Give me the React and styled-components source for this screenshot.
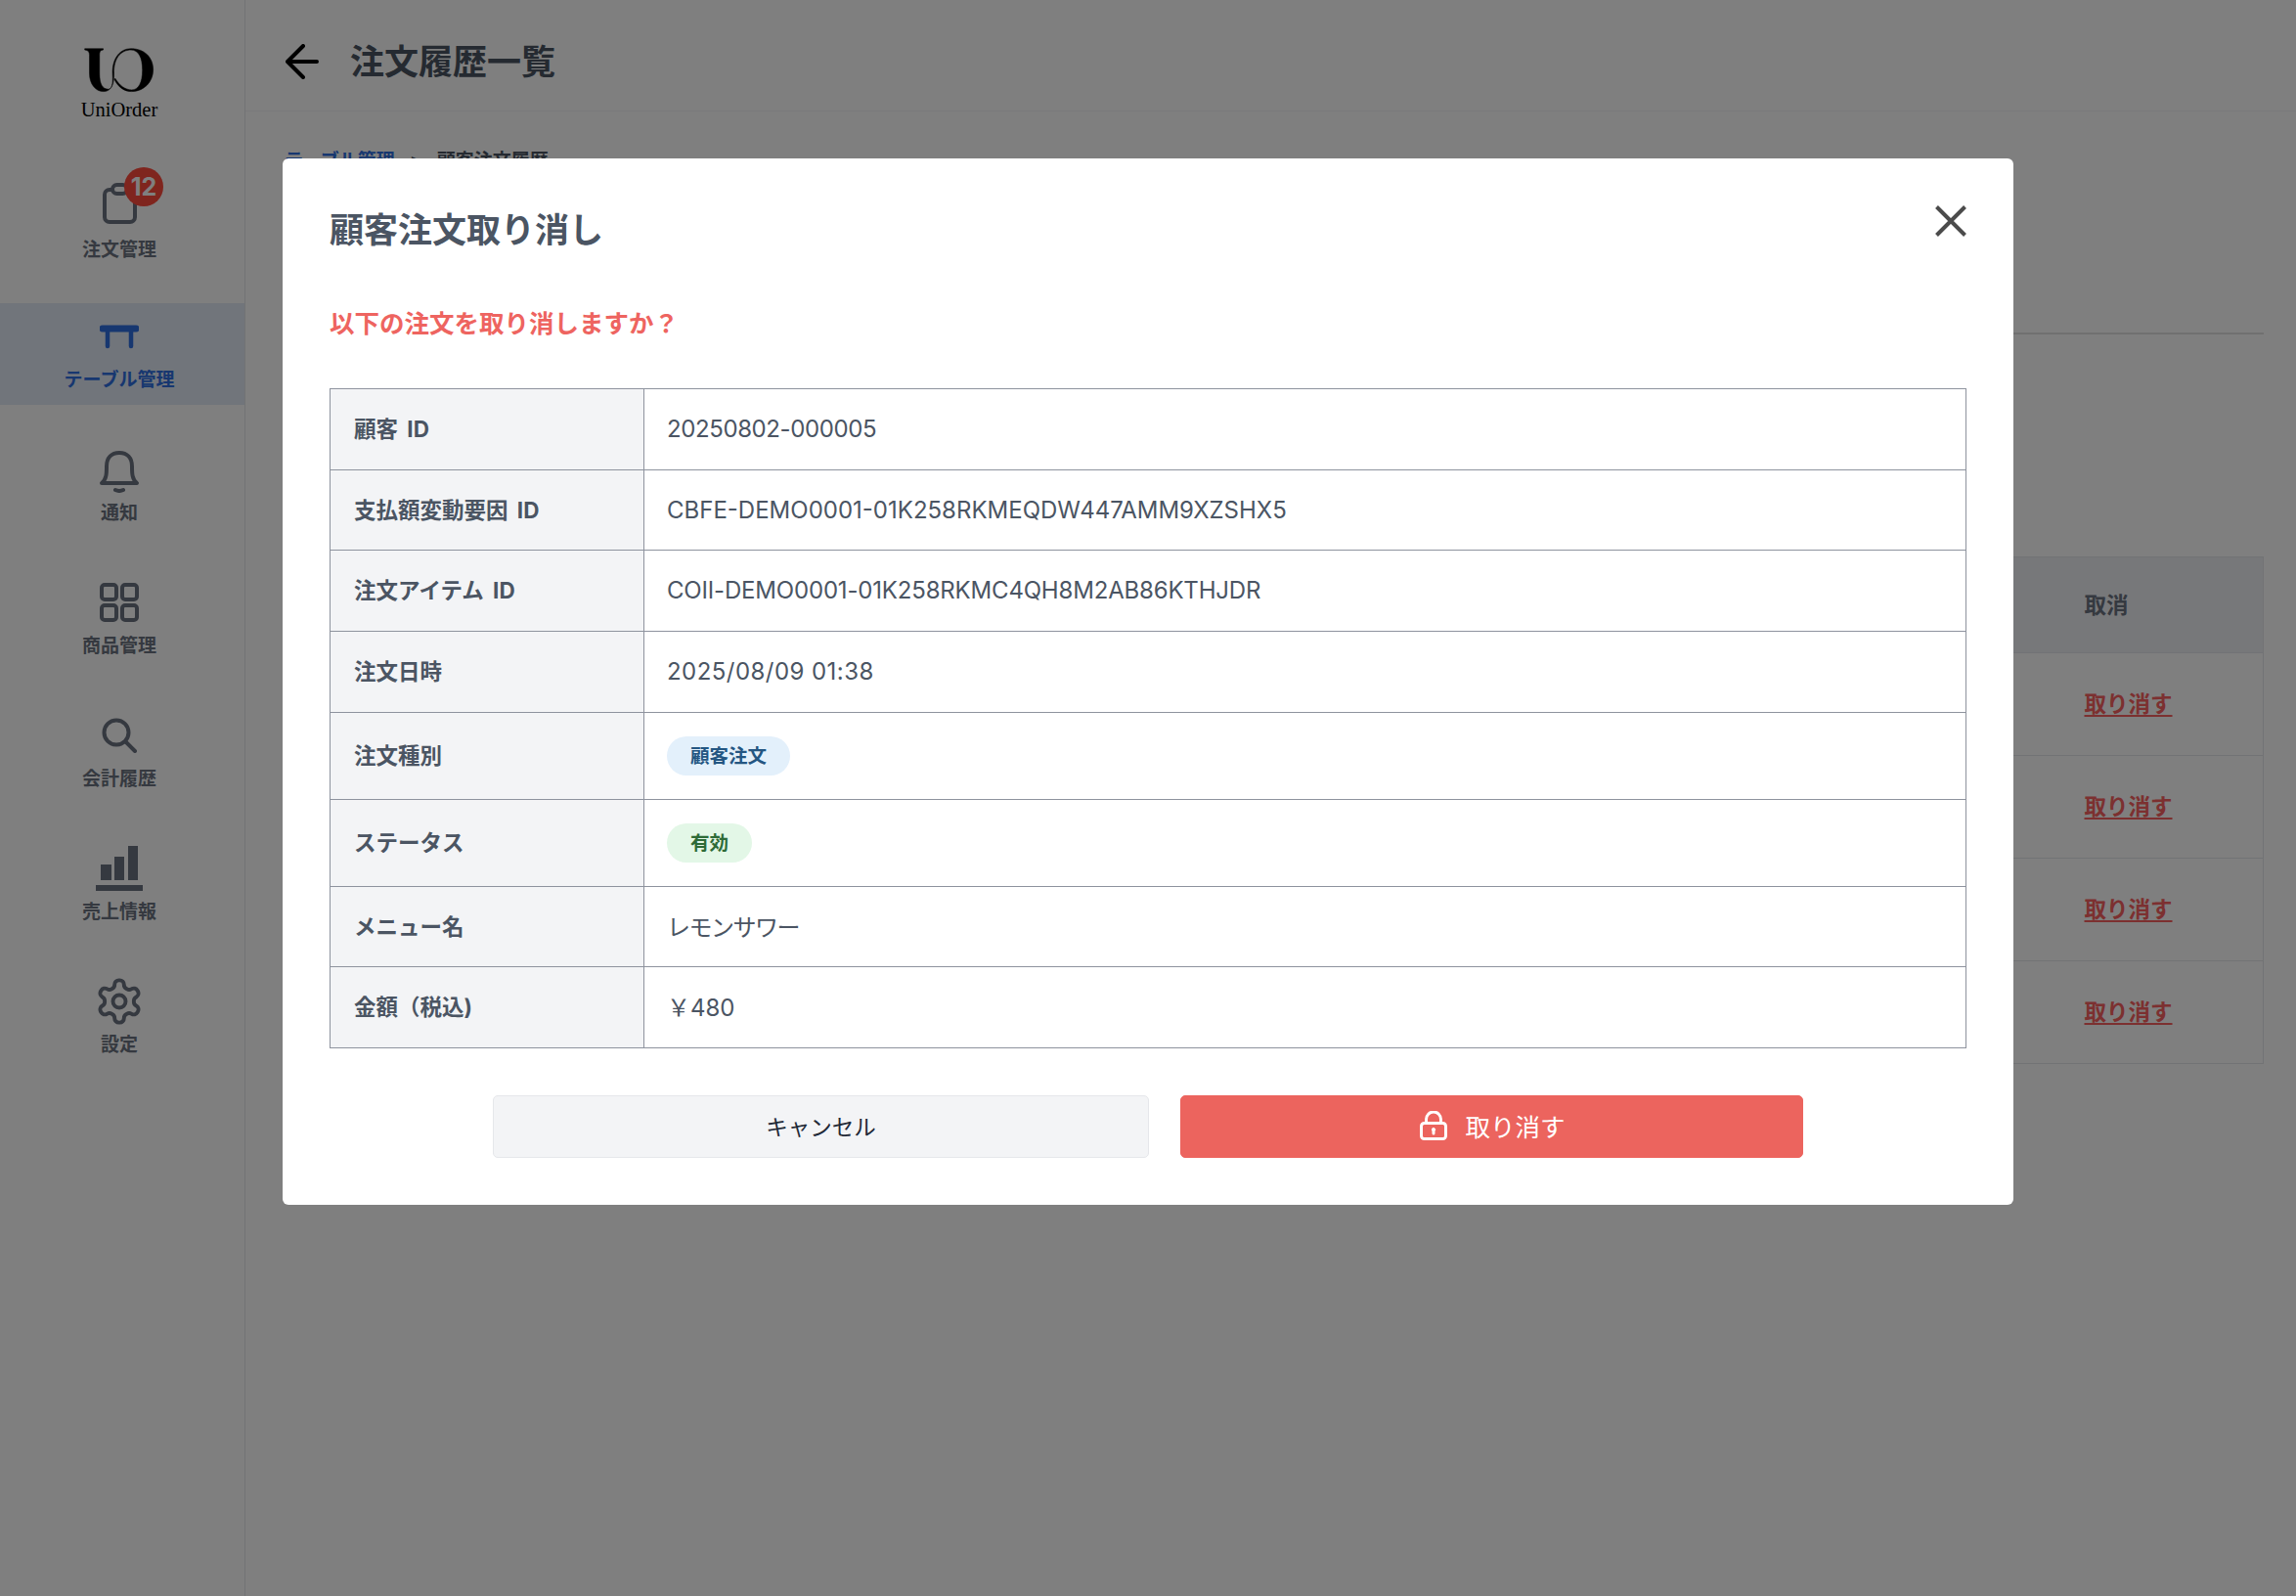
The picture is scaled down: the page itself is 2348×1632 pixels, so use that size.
import styled, { createGlobalStyle } from "styled-components";

const GlobalStyle = createGlobalStyle`
  * { box-sizing: border-box; }
  html, body { margin: 0; padding: 0; background: #fff; }
  body {
    font-family: "Inter", "Noto Sans CJK JP", sans-serif;
    color: #4b5563;
  }
`;

const Page = styled.div`
  display: flex;
  min-height: 100vh;
  background: #fff;
`;

const Sidebar = styled.aside`
  width: 251px;
  flex-shrink: 0;
  border-right: 1px solid #e5e7eb;
  background: #fff;
`;

const LogoBlock = styled.div`
  height: 174px;
  padding: 47px 6px 0 0;
  display: flex;
  flex-direction: column;
  align-items: center;
`;

const LogoText = styled.span`
  font-family: "Liberation Serif", serif;
  font-size: 20.5px;
  line-height: 24px;
  margin-top: 3px;
  color: #000;
`;

const Nav = styled.nav`
  display: flex;
  flex-direction: column;
  gap: 32px;
`;

const NavItem = styled.div`
  height: 104px;
  padding: 10px 6px 0 0;
  display: flex;
  flex-direction: column;
  align-items: center;
  background: ${(p) => (p.$active ? "#e3eaf6" : "transparent")};
  color: ${(p) => (p.$active ? "#2f6fe0" : "#6b7280")};
`;

const NavIcon = styled.div`
  position: relative;
  width: 52px;
  height: 48px;
  display: flex;
  align-items: center;
  justify-content: center;
  margin-bottom: ${(p) => (p.$badged ? "8px" : "5px")};
`;

const NavLabel = styled.span`
  font-size: 19px;
  line-height: 31px;
  font-weight: 700;
  white-space: nowrap;
`;

const CountBadge = styled.span`
  position: absolute;
  top: -13px;
  left: 31px;
  width: 40px;
  height: 40px;
  border-radius: 50%;
  background: #ff4a3d;
  color: #fff;
  font-size: 25px;
  font-weight: 700;
  display: flex;
  align-items: center;
  justify-content: center;
`;

const Main = styled.main`
  flex: 1;
  min-width: 0;
`;

const TopBar = styled.header`
  height: 114px;
  padding: 8px 40px 0 41px;
  border-bottom: 1px solid #f3f4f6;
  display: flex;
  align-items: center;
  gap: 32px;
`;

const BackLink = styled.span`
  display: flex;
  padding-top: 5px;
`;

const PageTitle = styled.h1`
  margin: 0;
  font-size: 35px;
  font-weight: 700;
  color: #4b5563;
`;

const Content = styled.div`
  padding: 36px 33px 0 40px;
`;

const Breadcrumb = styled.div`
  display: flex;
  align-items: center;
  gap: 15px;
  font-size: 19px;
  line-height: 30px;
  font-weight: 700;
`;

const CrumbLink = styled.span`
  color: #2f6fe0;
`;

const Divider = styled.div`
  height: 2px;
  margin-top: 160px;
  background: #e0e0e0;
`;

const OrderTable = styled.table`
  width: 100%;
  margin-top: 227px;
  border-collapse: collapse;
  border: 1px solid #e5e7eb;
`;

const OrderHead = styled.th`
  width: ${(p) => (p.$w ? `${p.$w}px` : "auto")};
  height: 98px;
  padding: 0 24px 3px;
  text-align: left;
  font-size: 22.5px;
  background: #eff0f4;
  color: #6b7280;
`;

const OrderCell = styled.td`
  height: 105px;
  padding: 0 24px 5px;
  border-top: 1px solid #e5e7eb;
`;

const CancelLink = styled.a`
  font-size: 22.5px;
  font-weight: 700;
  color: #f86060;
  text-decoration: underline;
  text-underline-offset: 3px;
`;

const Overlay = styled.div`
  position: fixed;
  inset: 0;
  padding-top: 162px;
  background: rgba(0, 0, 0, 0.5);
  display: flex;
  justify-content: center;
  align-items: flex-start;
`;

const Modal = styled.section`
  position: relative;
  width: 1770px;
  padding: 48px;
  border-radius: 6px;
  background: #fff;
`;

const CloseButton = styled.button`
  position: absolute;
  top: 48px;
  right: 48px;
  width: 32px;
  height: 32px;
  padding: 0;
  border: 0;
  background: none;
  display: flex;
`;

const ModalTitle = styled.h2`
  margin: 0;
  font-size: 35px;
  line-height: 50px;
  font-weight: 700;
  color: #4b5563;
`;

const Warning = styled.p`
  margin: 51px 0 0;
  font-size: 25.5px;
  line-height: 40px;
  font-weight: 700;
  color: #ee6460;
`;

const DetailTable = styled.table`
  width: 100%;
  margin-top: 46px;
  border-collapse: collapse;
  table-layout: fixed;
`;

const DetailRow = styled.tr`
  height: ${(p) => p.$h}px;
`;

const DetailHead = styled.th`
  width: 321px;
  padding: 0 24px 4px;
  border: 1px solid #8e939e;
  background: #f3f4f6;
  text-align: left;
  font-size: 22.5px;
  font-weight: 700;
  word-spacing: 4px;
  color: #4b5563;
`;

const DetailCell = styled.td`
  padding: 0 23px ${(p) => (p.$raise ? "3px" : "1px")};
  border: 1px solid #8e939e;
  font-size: 24px;
  font-weight: 400;
  letter-spacing: ${(p) => p.$track || 0}px;
  color: #4b5563;
`;

const Pill = styled.span`
  display: inline-flex;
  align-items: center;
  height: 40px;
  padding: 0 24px 2px;
  border-radius: 20px;
  font-size: 19.5px;
  font-weight: 700;
  letter-spacing: 0;
  background: ${(p) => (p.$tone === "green" ? "#e3f7e7" : "#e3f0fb")};
  color: ${(p) => (p.$tone === "green" ? "#2e6b37" : "#245682")};
`;

const Actions = styled.div`
  display: flex;
  justify-content: center;
  gap: 32px;
  margin-top: 48px;
`;

const ActionButton = styled.button`
  width: ${(p) => p.$w}px;
  height: 64px;
  padding: 0 0 3px ${(p) => (p.$danger ? "2px" : "0")};
  border-radius: 5px;
  display: flex;
  align-items: center;
  justify-content: center;
  gap: 18px;
  font-family: inherit;
  font-size: ${(p) => (p.$danger ? "25.5px" : "22.5px")};
  border: 1px solid ${(p) => (p.$danger ? "#ec645e" : "#e5e7eb")};
  background: ${(p) => (p.$danger ? "#ec645e" : "#f3f4f6")};
  color: ${(p) => (p.$danger ? "#fff" : "#1f2937")};
`;

const LogoMark = () => (
  <svg width="72" height="50" viewBox="50 42 210 134" fill="#000" stroke="#000" strokeWidth="1.5">
    <path d="M52 44H107V48C98 49 96 53 96 64V118C96 150 105 165 122 165C132 165 137 152 135 120C133 80 152 44 190 44C232 44 256 72 256 106C256 146 226 172 192 172C170 172 152 160 140 135L143 133C155 153 172 167 192 167C212 167 224 146 224 108C224 70 212 48 190 48C160 48 138 72 139 118C140 152 130 172 108 172C84 172 66 150 66 118V64C66 53 62 49 52 48Z" />
  </svg>
);

const Icon = ({ w, h, box, fill = "none", sw = 4, children }) => (
  <svg
    width={w}
    height={h}
    viewBox={box}
    fill={fill}
    stroke={fill === "none" ? "currentColor" : "none"}
    strokeWidth={sw}
    strokeLinecap="round"
    strokeLinejoin="round"
  >
    {children}
  </svg>
);

const ClipboardIcon = () => (
  <Icon w={36} h={44} box="0 0 36 44">
    <rect x="3" y="8" width="31" height="33" rx="5" />
    <rect x="11" y="3" width="15" height="9" rx="4.5" fill="#fff" />
  </Icon>
);

const TableIcon = () => (
  <Icon w={40} h={26} box="0 0 40 26" sw={4.5}>
    <path d="M3 5H37" strokeWidth="7" />
    <path d="M8 8V23M32 8V23" />
  </Icon>
);

const BellIcon = () => (
  <Icon w={42} h={48} box="0 -4 42 48">
    <path d="M3 34C8 30 8 24 8 17C8 8 13 3 21 3C29 3 34 8 34 17C34 24 34 30 39 34Z" />
    <path d="M17 41Q21 43 25 41" />
  </Icon>
);

const GridIcon = () => (
  <Icon w={40} h={40} box="0 0 40 40">
    <rect x="2" y="2" width="15" height="15" rx="3" />
    <rect x="23" y="2" width="15" height="15" rx="3" />
    <rect x="2" y="23" width="15" height="15" rx="3" />
    <rect x="23" y="23" width="15" height="15" rx="3" />
  </Icon>
);

const SearchIcon = () => (
  <Icon w={36} h={36} box="0 0 36 36">
    <circle cx="15" cy="15" r="12.5" />
    <path d="M24.5 24.5L34 34" />
  </Icon>
);

const ChartIcon = () => (
  <Icon w={48} h={46} box="0 0 48 46" fill="currentColor">
    <rect x="5" y="19" width="11" height="16" />
    <rect x="19" y="11" width="10" height="24" />
    <rect x="33" y="0" width="10" height="35" />
    <rect x="0" y="40" width="48" height="6" />
  </Icon>
);

const GearIcon = () => (
  <Icon w={52} h={52} box="0 0 24 24" sw={1.8}>
    <path d="M12.22 2h-.44a2 2 0 0 0-2 2v.18a2 2 0 0 1-1 1.73l-.43.25a2 2 0 0 1-2 0l-.15-.08a2 2 0 0 0-2.73.73l-.22.38a2 2 0 0 0 .73 2.73l.15.1a2 2 0 0 1 1 1.72v.51a2 2 0 0 1-1 1.74l-.15.09a2 2 0 0 0-.73 2.73l.22.38a2 2 0 0 0 2.73.73l.15-.08a2 2 0 0 1 2 0l.43.25a2 2 0 0 1 1 1.73V20a2 2 0 0 0 2 2h.44a2 2 0 0 0 2-2v-.18a2 2 0 0 1 1-1.73l.43-.25a2 2 0 0 1 2 0l.15.08a2 2 0 0 0 2.73-.73l.22-.39a2 2 0 0 0-.73-2.73l-.15-.08a2 2 0 0 1-1-1.74v-.5a2 2 0 0 1 1-1.74l.15-.09a2 2 0 0 0 .73-2.73l-.22-.38a2 2 0 0 0-2.73-.73l-.15.08a2 2 0 0 1-2 0l-.43-.25a2 2 0 0 1-1-1.73V4a2 2 0 0 0-2-2z" />
    <circle cx="12" cy="12" r="3" />
  </Icon>
);

const BackArrow = () => (
  <svg width="34" height="36" viewBox="0 0 34 36" fill="none" stroke="#000" strokeWidth="4" strokeLinecap="round" strokeLinejoin="round">
    <path d="M32 18H3M18 2L2 18L18 34" />
  </svg>
);

const CloseIcon = () => (
  <svg width="32" height="32" viewBox="0 0 32 32" fill="none" stroke="#4b4b4b" strokeWidth="4">
    <path d="M1.5 1.5L30.5 30.5M30.5 1.5L1.5 30.5" />
  </svg>
);

const LockIcon = () => (
  <svg width="28" height="30" viewBox="0 0 28 30" fill="none" stroke="#fff" strokeWidth="3" strokeLinecap="round" strokeLinejoin="round">
    <rect x="1.5" y="12.5" width="25" height="16" rx="3" />
    <path d="M6.5 12V8.5a7.5 7.5 0 0 1 15 0V12" />
    <circle cx="14" cy="19" r="1.6" fill="#fff" strokeWidth="1" />
    <path d="M14 20v3" />
  </svg>
);

const navItems = [
  { label: "注文管理", icon: <ClipboardIcon />, badge: 12 },
  { label: "テーブル管理", icon: <TableIcon />, active: true },
  { label: "通知", icon: <BellIcon /> },
  { label: "商品管理", icon: <GridIcon /> },
  { label: "会計履歴", icon: <SearchIcon /> },
  { label: "売上情報", icon: <ChartIcon /> },
  { label: "設定", icon: <GearIcon /> },
];

const details = [
  { label: "顧客 ID", value: "20250802-000005", h: 83, track: -0.4 },
  { label: "支払額変動要因 ID", value: "CBFE-DEMO0001-01K258RKMEQDW447AMM9XZSHX5", h: 82 },
  { label: "注文アイテム ID", value: "COII-DEMO0001-01K258RKMC4QH8M2AB86KTHJDR", h: 83, track: -0.18 },
  { label: "注文日時", value: "2025/08/09 01:38", h: 83, track: 0.45 },
  { label: "注文種別", value: <Pill>顧客注文</Pill>, h: 89 },
  { label: "ステータス", value: <Pill $tone="green">有効</Pill>, h: 89 },
  { label: "メニュー名", value: "レモンサワー", h: 82, track: -1.5, raise: true },
  { label: "金額（税込)", value: "￥480", h: 83, raise: true },
];

export default function App() {
  return (
    <>
      <GlobalStyle />
      <Page>
        <Sidebar>
          <LogoBlock>
            <LogoMark />
            <LogoText>UniOrder</LogoText>
          </LogoBlock>
          <Nav>
            {navItems.map((item) => (
              <NavItem key={item.label} $active={item.active}>
                <NavIcon $badged={!!item.badge}>
                  {item.icon}
                  {item.badge && <CountBadge>{item.badge}</CountBadge>}
                </NavIcon>
                <NavLabel>{item.label}</NavLabel>
              </NavItem>
            ))}
          </Nav>
        </Sidebar>

        <Main>
          <TopBar>
            <BackLink>
              <BackArrow />
            </BackLink>
            <PageTitle>注文履歴一覧</PageTitle>
          </TopBar>
          <Content>
            <Breadcrumb>
              <CrumbLink>テーブル管理</CrumbLink>
              <span>&gt;</span>
              <span>顧客注文履歴</span>
            </Breadcrumb>
            <Divider />
            <OrderTable>
              <thead>
                <tr>
                  <OrderHead />
                  <OrderHead $w={207}>取消</OrderHead>
                </tr>
              </thead>
              <tbody>
                {[0, 1, 2, 3].map((n) => (
                  <tr key={n}>
                    <OrderCell />
                    <OrderCell>
                      <CancelLink>取り消す</CancelLink>
                    </OrderCell>
                  </tr>
                ))}
              </tbody>
            </OrderTable>
          </Content>
        </Main>
      </Page>

      <Overlay>
        <Modal>
          <CloseButton aria-label="閉じる">
            <CloseIcon />
          </CloseButton>
          <ModalTitle>顧客注文取り消し</ModalTitle>
          <Warning>以下の注文を取り消しますか？</Warning>
          <DetailTable>
            <tbody>
              {details.map((row) => (
                <DetailRow key={row.label} $h={row.h}>
                  <DetailHead>{row.label}</DetailHead>
                  <DetailCell $track={row.track} $raise={row.raise}>
                    {row.value}
                  </DetailCell>
                </DetailRow>
              ))}
            </tbody>
          </DetailTable>
          <Actions>
            <ActionButton $w={671}>キャンセル</ActionButton>
            <ActionButton $w={637} $danger>
              <LockIcon />
              取り消す
            </ActionButton>
          </Actions>
        </Modal>
      </Overlay>
    </>
  );
}
